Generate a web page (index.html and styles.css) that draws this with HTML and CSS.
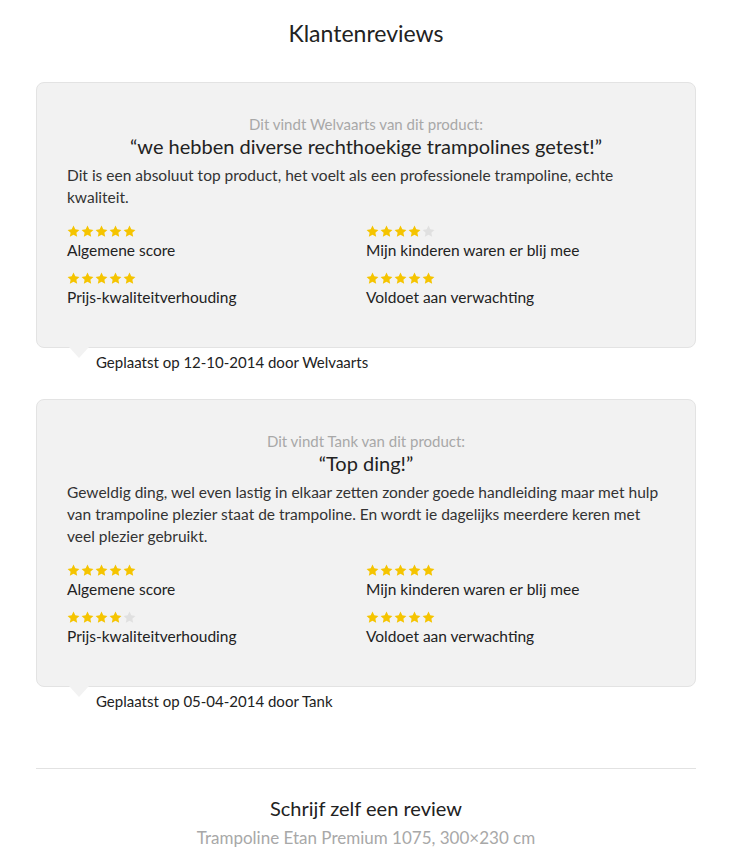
FILE: index.html
```html
<!DOCTYPE html>
<html lang="nl">
<head>
    <meta charset="UTF-8">
    <meta name="viewport" content="width=device-width, initial-scale=1.0">
    <title>Klantenreviews</title>
    <link rel="stylesheet" href="styles.css">
</head>
<body>

    <!-- ster-symbool, wordt hergebruikt in de beoordelingen -->
    <svg class="hidden" xmlns="http://www.w3.org/2000/svg">
        <symbol id="star" viewBox="0 0 24 24">
            <polygon points="12,1.1 15.29,8.07 22.94,9.05 17.33,14.33 18.76,21.9 12,18.2 5.24,21.9 6.67,14.33 1.06,9.05 8.71,8.07"/>
        </symbol>
    </svg>

    <div class="reviews">
        <h2 class="reviews-title">Klantenreviews</h2>

        <!-- Review 1 -->
        <div class="review">
            <div class="review-box">
                <p class="review-by">Dit vindt Welvaarts van dit product:</p>
                <h3 class="review-quote">“we hebben diverse rechthoekige trampolines getest!”</h3>
                <p class="review-text">Dit is een absoluut top product, het voelt als een professionele trampoline, echte kwaliteit.</p>

                <div class="scores">
                    <div class="score">
                        <div class="stars">
                            <svg class="star on"><use href="#star"/></svg><svg class="star on"><use href="#star"/></svg><svg class="star on"><use href="#star"/></svg><svg class="star on"><use href="#star"/></svg><svg class="star on"><use href="#star"/></svg>
                        </div>
                        <span>Algemene score</span>
                    </div>
                    <div class="score">
                        <div class="stars">
                            <svg class="star on"><use href="#star"/></svg><svg class="star on"><use href="#star"/></svg><svg class="star on"><use href="#star"/></svg><svg class="star on"><use href="#star"/></svg><svg class="star"><use href="#star"/></svg>
                        </div>
                        <span>Mijn kinderen waren er blij mee</span>
                    </div>
                    <div class="score">
                        <div class="stars">
                            <svg class="star on"><use href="#star"/></svg><svg class="star on"><use href="#star"/></svg><svg class="star on"><use href="#star"/></svg><svg class="star on"><use href="#star"/></svg><svg class="star on"><use href="#star"/></svg>
                        </div>
                        <span>Prijs-kwaliteitverhouding</span>
                    </div>
                    <div class="score">
                        <div class="stars">
                            <svg class="star on"><use href="#star"/></svg><svg class="star on"><use href="#star"/></svg><svg class="star on"><use href="#star"/></svg><svg class="star on"><use href="#star"/></svg><svg class="star on"><use href="#star"/></svg>
                        </div>
                        <span>Voldoet aan verwachting</span>
                    </div>
                </div>
            </div>
            <p class="review-date">Geplaatst op 12-10-2014 door Welvaarts</p>
        </div>

        <!-- Review 2 -->
        <div class="review">
            <div class="review-box">
                <p class="review-by">Dit vindt Tank van dit product:</p>
                <h3 class="review-quote">“Top ding!”</h3>
                <p class="review-text">Geweldig ding, wel even lastig in elkaar zetten zonder goede handleiding maar met hulp van trampoline plezier staat de trampoline. En wordt ie dagelijks meerdere keren met veel plezier gebruikt.</p>

                <div class="scores">
                    <div class="score">
                        <div class="stars">
                            <svg class="star on"><use href="#star"/></svg><svg class="star on"><use href="#star"/></svg><svg class="star on"><use href="#star"/></svg><svg class="star on"><use href="#star"/></svg><svg class="star on"><use href="#star"/></svg>
                        </div>
                        <span>Algemene score</span>
                    </div>
                    <div class="score">
                        <div class="stars">
                            <svg class="star on"><use href="#star"/></svg><svg class="star on"><use href="#star"/></svg><svg class="star on"><use href="#star"/></svg><svg class="star on"><use href="#star"/></svg><svg class="star on"><use href="#star"/></svg>
                        </div>
                        <span>Mijn kinderen waren er blij mee</span>
                    </div>
                    <div class="score">
                        <div class="stars">
                            <svg class="star on"><use href="#star"/></svg><svg class="star on"><use href="#star"/></svg><svg class="star on"><use href="#star"/></svg><svg class="star on"><use href="#star"/></svg><svg class="star"><use href="#star"/></svg>
                        </div>
                        <span>Prijs-kwaliteitverhouding</span>
                    </div>
                    <div class="score">
                        <div class="stars">
                            <svg class="star on"><use href="#star"/></svg><svg class="star on"><use href="#star"/></svg><svg class="star on"><use href="#star"/></svg><svg class="star on"><use href="#star"/></svg><svg class="star on"><use href="#star"/></svg>
                        </div>
                        <span>Voldoet aan verwachting</span>
                    </div>
                </div>
            </div>
            <p class="review-date">Geplaatst op 05-04-2014 door Tank</p>
        </div>

        <hr class="divider">

        <!-- Schrijf een review -->
        <div class="write-review">
            <h2 class="write-title">Schrijf zelf een review</h2>
            <p class="write-product">Trampoline Etan Premium 1075, 300×230 cm</p>
        </div>
    </div>

</body>
</html>
```

FILE: styles.css
```css
* {
    margin: 0;
    padding: 0;
    box-sizing: border-box;
}
body {
    background: #fff;
    font-family: Lato, 'Noto Sans', sans-serif;
    color: #222;
}
.hidden {
    display: none;
}
.reviews {
    width: 660px;
    margin-left: 36px;
    padding-top: 18px;
}
.reviews-title {
    text-align: center;
    font-size: 23px;
    font-weight: 400;
    line-height: 30px;
    margin-bottom: 34px;
}
.review {
    margin-bottom: 26px;
}
.review-box {
    position: relative;
    background: #f2f2f2;
    border: 1px solid #e3e3e3;
    border-radius: 8px;
    padding: 31px 30px 39px;
}
/* pijltje onder de box */
.review-box::after {
    content: "";
    position: absolute;
    left: 32px;
    bottom: -11px;
    border-left: 10px solid transparent;
    border-right: 10px solid transparent;
    border-top: 11px solid #f2f2f2;
}
.review-by {
    text-align: center;
    color: #a8a8a8;
    font-size: 15px;
    line-height: 20px;
}
.review-quote {
    text-align: center;
    font-size: 20px;
    font-weight: 400;
    line-height: 24px;
    margin-bottom: 6px;
}
.review-text {
    font-size: 15.5px;
    line-height: 22px;
    color: #333;
}
.scores {
    display: grid;
    grid-template-columns: 1fr 1fr;
    row-gap: 11px;
    margin-top: 17px;
}
.score span {
    display: block;
    font-size: 15.5px;
    line-height: 22px;
    color: #222;
}
.stars {
    display: flex;
    gap: 1px;
    height: 14px;
}
.star {
    width: 13px;
    height: 13px;
    fill: #e0e0e0;
}
.star.on {
    fill: #f5c400;
}
.review-date {
    padding: 3px 0 0 60px;
    font-size: 15px;
    line-height: 22px;
    color: #222;
}
.divider {
    border: none;
    border-top: 1px solid #e2e2e2;
    margin-top: 56px;
}
.write-review {
    text-align: center;
    padding-top: 25px;
}
.write-title {
    font-size: 20px;
    font-weight: 400;
    line-height: 28px;
}
.write-product {
    color: #a8a8a8;
    font-size: 17px;
    line-height: 26px;
    margin-top: 3px;
}
```
